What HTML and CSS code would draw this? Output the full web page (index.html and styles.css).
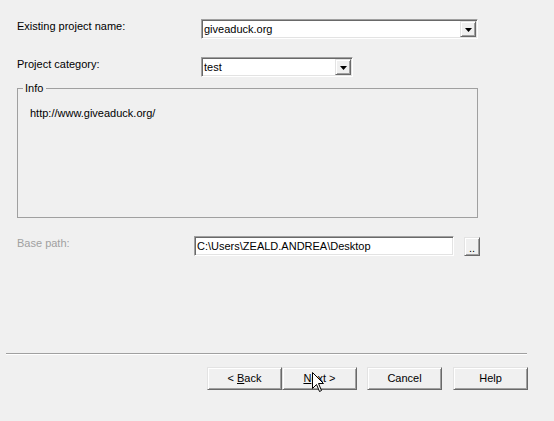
FILE: index.html
```html
<!DOCTYPE html>
<html lang="en">
<head>
    <meta charset="UTF-8">
    <meta name="viewport" content="width=device-width, initial-scale=1.0">
    <title>Project Wizard</title>
    <link rel="stylesheet" href="styles.css">
</head>
<body>
    <div class="wizard">
        <div class="row">
            <label class="field-label">Existing project name:</label>
            <div class="combo combo-name">
                <span class="combo-text">giveaduck.org</span>
                <span class="combo-button">
                    <svg width="7" height="4" viewBox="0 0 7 4"><polygon points="0,0 7,0 3.5,4" fill="#000"/></svg>
                </span>
            </div>
        </div>
        <div class="row row-category">
            <label class="field-label">Project category:</label>
            <div class="combo combo-category">
                <span class="combo-text">test</span>
                <span class="combo-button">
                    <svg width="7" height="4" viewBox="0 0 7 4"><polygon points="0,0 7,0 3.5,4" fill="#000"/></svg>
                </span>
            </div>
        </div>
        <fieldset class="groupbox">
            <legend>Info</legend>
            <p class="info-url">http://www.giveaduck.org/</p>
        </fieldset>
        <div class="row row-path">
            <label class="field-label path-label disabled">Base path:</label>
            <div class="textbox">C:\Users\ZEALD.ANDREA\Desktop</div>
            <button class="btn btn-browse">..</button>
        </div>
    </div>

    <hr class="separator">

    <div class="buttons">
        <button class="btn">&lt; <u>B</u>ack</button>
        <button class="btn"><u>N</u>ext &gt;</button>
        <button class="btn btn-cancel">Cancel</button>
        <button class="btn btn-help">Help</button>
    </div>

    <svg class="cursor" width="13" height="21" viewBox="0 0 13 21">
        <path d="M0.5 0.5 V16.5 L4.5 12.5 L7.5 19.5 L9.5 18.5 L6.5 11.5 H11.5 Z" fill="#fff" stroke="#000" stroke-width="1"/>
    </svg>
</body>
</html>
```

FILE: styles.css
```css
html, body {
    margin: 0;
    width: 554px;
    height: 421px;
    overflow: hidden;
}
body {
    position: relative;
    background-color: #f0f0f0;
    font-family: "Liberation Sans", Arial, sans-serif;
    font-size: 11px;
    color: #000;
}
.wizard {
    padding: 19px 0 0 17px;
}
.row {
    display: flex;
    align-items: flex-start;
    height: 20px;
}
.row-category {
    margin-top: 18px;
}
.row-path {
    margin-top: 18px;
}
.field-label {
    width: 184px;
    margin-top: 1px;
    line-height: 13px;
}
.path-label {
    width: 177px;
}
.disabled {
    color: #a0a0a0;
}
.combo, .textbox {
    box-sizing: border-box;
    height: 20px;
    padding: 1px;
    background: #fff;
    border: 1px solid;
    border-color: #a0a0a0 #fff #fff #a0a0a0;
    box-shadow: inset 1px 1px #696969, inset -1px -1px #e3e3e3;
    line-height: 16px;
}
.combo {
    display: flex;
}
.combo-name {
    width: 277px;
}
.combo-category {
    width: 152px;
}
.combo-text {
    flex: 1;
    padding-left: 1px;
}
.combo-button {
    box-sizing: border-box;
    width: 16px;
    height: 16px;
    display: flex;
    align-items: center;
    justify-content: center;
    background: #f0f0f0;
    border: 1px solid;
    border-color: #e3e3e3 #696969 #696969 #e3e3e3;
    box-shadow: inset 1px 1px #fff, inset -1px -1px #a0a0a0;
}
.combo-button svg {
    display: block;
    margin-top: 1px;
}
.groupbox {
    box-sizing: border-box;
    width: 461px;
    height: 136px;
    margin: 5px 0 0;
    padding: 0 0 0 5px;
    border: 1px solid #a0a0a0;
    min-inline-size: 0;
}
.groupbox legend {
    padding: 0 3px 0 2px;
    line-height: 12px;
}
.info-url {
    margin: 13px 0 0 7px;
    line-height: 13px;
}
.textbox {
    width: 260px;
    padding-left: 2px;
}
.btn {
    box-sizing: border-box;
    width: 75px;
    height: 23px;
    padding: 0;
    background: #f0f0f0;
    border: 1px solid;
    border-color: #e3e3e3 #696969 #696969 #e3e3e3;
    box-shadow: inset 1px 1px #fff, inset -1px -1px #a0a0a0;
    font-family: inherit;
    font-size: 11px;
    line-height: 19px;
    color: #000;
}
.btn-browse {
    width: 16px;
    height: 19px;
    margin: 1px 0 0 10px;
    line-height: 14px;
    padding-top: 3px;
}
.separator {
    box-sizing: content-box;
    width: 521px;
    height: 0;
    margin: 97px 0 0 6px;
    border: 0;
    border-top: 1px solid #a0a0a0;
    border-bottom: 1px solid #fff;
}
.buttons {
    display: flex;
    margin-top: 12px;
    padding-left: 207px;
}
.btn-cancel {
    margin-left: 10px;
}
.btn-help {
    margin-left: 11px;
}
.cursor {
    position: absolute;
    left: 312px;
    top: 372px;
}
```
